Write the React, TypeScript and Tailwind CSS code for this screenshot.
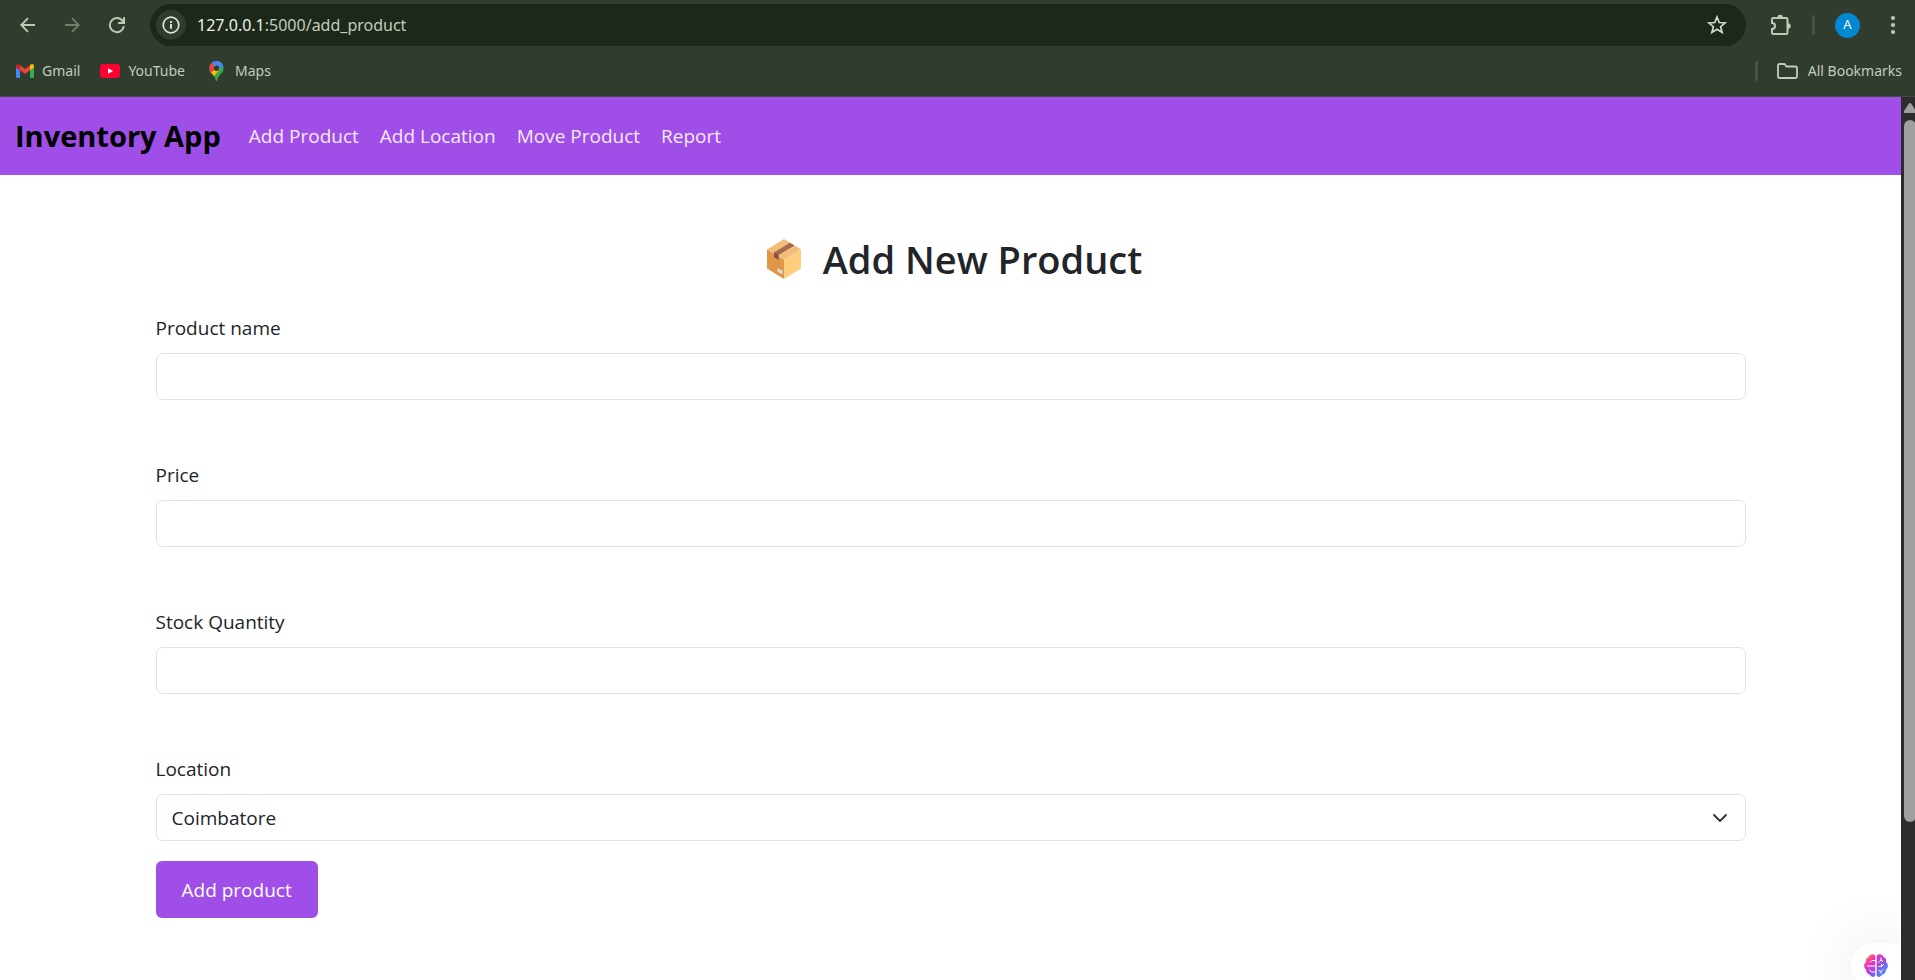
import React from "react";

const bookmarkClass = "flex items-center text-[14px] text-[#c4cbbd]";

function Toolbar() {
  return (
    <div className="flex h-[50px] items-center pl-4 pr-[15px] text-[#bccbb2]">
      <button aria-label="Back" className="p-1">
        <svg className="size-4" viewBox="0 0 16 16" fill="none" stroke="currentColor" strokeWidth="1.8"><path d="M15 8H1.500M8 1.200 1.300 8 8 14.800" /></svg>
      </button>
      <button aria-label="Forward" className="ml-5 p-1 text-[#6f7d69]">
        <svg className="size-4" viewBox="0 0 16 16" fill="none" stroke="currentColor" strokeWidth="1.8"><path d="M1 8h13.500M8 1.200 14.700 8 8 14.800" /></svg>
      </button>
      <button aria-label="Reload" className="ml-5 p-1">
        <svg className="size-[18px]" viewBox="0 0 18 18" fill="none" stroke="currentColor" strokeWidth="2"><path d="M15.800 10.200A7 7 0 1 1 14.700 5.200L16 6.800M16 1.200v5.800h-5.800" /></svg>
      </button>
      <div className="ml-5 flex h-[42px] min-w-0 flex-1 items-center rounded-full bg-[#1b281a] pl-[6px] pr-[19px]">
        <button aria-label="View site information" className="flex size-[30px] items-center justify-center rounded-full bg-[#303d2e] text-[#e0e6d8]">
          <svg className="size-[18px]" viewBox="0 0 18 18" fill="none" stroke="currentColor"><circle cx="9" cy="9" r="7.800" strokeWidth="1.700" /><path d="M9 8v4.800M9 5v1.900" strokeWidth="1.900" /></svg>
        </button>
        <div className="ml-[11px] min-w-0 flex-1 text-[16px]">
          <a href="#" className="text-[#c5cdbd]"><span className="text-[#eef1e8]">127.0.0.1</span>:5000/add_product</a>
        </div>
        <button aria-label="Bookmark this tab" className="text-[#d2d8ca]">
          <svg className="size-5" viewBox="0 0 20 20" fill="none" stroke="currentColor" strokeWidth="1.700"><path d="m10 2 2.200 5.500 6 .400-4.600 3.800 1.500 5.800L10 14.300l-5.100 3.200 1.500-5.800L1.800 7.900l6-.400Z" /></svg>
        </button>
      </div>
      <button aria-label="Extensions" className="ml-6">
        <svg className="size-[22px]" viewBox="0 0 22 22" fill="none" stroke="currentColor" strokeWidth="2"><path d="M3.300 4h13q1.200 0 1.200 1.200v13.600q0 1.200-1.200 1.200h-13Q2 20 2 18.800v-3.700q3 0 3-3.100T2 8.900V5.200Q2 4 3.300 4Z" /><path d="M7.500 3.500a2.700 2.700 0 0 1 5.400 0ZM18 9.300a2.700 2.700 0 0 1 0 5.400Z" fill="currentColor" stroke="none" /></svg>
      </button>
      <div className="ml-5 h-5 w-[3px] rounded-full bg-[#455541]" />
      <button aria-label="Profile" className="ml-5 flex size-[25px] items-center justify-center rounded-full bg-[#0288d1] text-[13px] text-white">A</button>
      <button aria-label="Menu" className="ml-[26px] px-1">
        <svg className="h-5 w-[6px]" viewBox="0 0 6 20" fill="currentColor"><circle cx="3" cy="3" r="2.100" /><circle cx="3" cy="10" r="2.100" /><circle cx="3" cy="17" r="2.100" /></svg>
      </button>
    </div>
  );
}

function Bookmarks() {
  return (
    <div className="flex h-[46px] items-center pb-[5px] pl-4 pr-[13px]">
      <a href="#" className={bookmarkClass}>
        <svg className="mr-2 h-[14px] w-[18px]" viewBox="0 0 18 14"><path d="M0 2v10.700Q0 14 1.300 14H4V5.200Z" fill="#4285f4" /><path d="M18 2v10.700q0 1.300-1.300 1.300H14V5.200Z" fill="#34a853" /><path d="M4 1.200 9 5l5-3.800v5L9 10 4 6.200Z" fill="#ea4335" /><path d="M0 2Q0 0 1.900 0 2.700 0 4 1.200v5L0 3.500Z" fill="#c5221f" /><path d="M18 2q0-2-1.900-2-.8 0-2.100 1.200v5l4-2.700Z" fill="#fbbc04" /></svg>
        Gmail
      </a>
      <a href="#" className={bookmarkClass + " ml-5"}>
        <svg className="mr-2 h-[14px] w-5" viewBox="0 0 20 14"><rect width="20" height="14" rx="3" fill="#ff0033" /><path d="m8 4.300 5 2.700-5 2.700Z" fill="#fff" /></svg>
        YouTube
      </a>
      <a href="#" className={bookmarkClass + " ml-6"}>
        <svg className="mr-[11px] h-5 w-[15px]" viewBox="0 0 15 20"><defs><clipPath id="pin"><path d="M7.500 0A7.200 7.200 0 0 0 .3 7.200C.3 12.500 6 13.500 6.700 19.200q.2.800.8.800t.8-.800C9 13.500 14.700 12.500 14.700 7.200A7.200 7.200 0 0 0 7.500 0Z" /></clipPath></defs><g clipPath="url(#pin)"><path d="M0 0h15v20H0Z" fill="#34a853" /><path d="M0 13 11 0H0Z" fill="#1a73e8" /><path d="M0 0v7l7.500 1L4 0Z" fill="#ea4335" /><path d="M5 0 15 0v5L8 9 3 2.500Z" fill="#4285f4" /><path d="M0 12 6 4l5 4-7.500 9Z" fill="#fbbc04" /><path d="m0 2 7 5-6 6Z" fill="#ea4335" /></g><circle cx="7.500" cy="7.200" r="2.700" fill="#303d2e" /></svg>
        Maps
      </a>
      <div className="ml-auto h-5 w-[3px] rounded-full bg-[#455541]" />
      <a href="#" className={bookmarkClass + " ml-[19px]"}>
        <svg className="mr-[10px] h-4 w-[21px]" viewBox="0 0 21 16" fill="none" stroke="currentColor" strokeWidth="1.800"><path d="M1 2.500Q1 1 2.500 1h5l2 2.500h9Q20 3.500 20 5v8.500q0 1.500-1.500 1.500h-16Q1 15 1 13.500Z" /></svg>
        All Bookmarks
      </a>
    </div>
  );
}

function TextField({ id, label }: { id: string; label: string }) {
  return (
    <div className="mb-[62px]">
      <label htmlFor={id} className="mb-3 block">{label}</label>
      <input id={id} name={id} className="block h-[47px] w-full rounded-[7px] border border-[#dee2e6] bg-white px-[15px]" />
    </div>
  );
}

function PackageIcon() {
  return (
    <svg className="h-10 w-[34px]" viewBox="0 0 34 40" aria-hidden="true">
      <path d="M17 0 34 10.500 17 21 0 10.500Z" fill="#f2bd79" />
      <path d="M0 10.500 17 21v19L0 29.500Z" fill="#e19747" />
      <path d="M34 10.500 17 21v19l17-10.500Z" fill="#ffce7c" />
      <path d="m23 3.700 4.500 2.700L11.500 16v4.700L7 18v-4.600Z" fill="#a56a52" />
      <path d="m7 13.400 4.500 2.800v4.500L7 18Z" fill="#8a5140" />
      <path d="m10.500 29 5 2.500v4l-5-2.800Z" fill="#dadada" />
    </svg>
  );
}

function BrainIcon() {
  return (
    <svg className="h-[23px] w-6" viewBox="0 0 24 23" aria-hidden="true">
      <defs>
        <linearGradient id="brain" x1="0" y1="0" x2="1" y2="1">
          <stop offset="0" stopColor="#ffa000" /><stop offset=".3" stopColor="#f431b5" /><stop offset=".6" stopColor="#8a52ef" /><stop offset="1" stopColor="#22b2ff" />
        </linearGradient>
      </defs>
      <path d="M11.300 1.500C9-.800 5.500 0 4.500 3 2 4 1.500 6 2 8-.5 10-.5 14 2 15.500c0 3 1.500 4.500 3.500 5 2 3 5 3 5.800 1ZM12.700 1.500C15-.800 18.500 0 19.500 3c2.500 1 3 3 2.500 5 2.500 2 2.500 6 0 7.500 0 3-1.500 4.500-3.500 5-2 3-5 3-5.800 1Z" fill="url(#brain)" />
      <path d="M11 6.500H8L6 8.500M3 12h8M5.500 15.500l2 2.500H11M14.500 8.500l2.500-2.500V3.500M17 6l2 1.500M14.500 12.500h3l2.500-2.500M17.500 12.500v-2.500M14.500 16.500l2.500 1 2-2M17 17.500v2" fill="none" stroke="#fff" strokeWidth="1" />
    </svg>
  );
}

const links = ["Add Product", "Add Location", "Move Product", "Report"];

export default function App() {
  return (
    <div className="flex h-screen flex-col overflow-hidden bg-[#303d2e] font-['Open_Sans',sans-serif]">
      <header className="shrink-0 border-b border-[#434c41] font-['Noto_Sans',sans-serif]">
        <Toolbar />
        <Bookmarks />
      </header>
      <div className="flex min-h-0 flex-1">
        <div className="relative flex min-w-0 flex-1 flex-col overflow-hidden bg-white text-[19px] leading-[26px] text-[#212529]">
          <nav className="flex h-[78px] shrink-0 items-center bg-[#a04ee8] px-[15px]">
            <a href="#" className="mr-7 text-[29px] font-bold text-black">Inventory App</a>
            <div className="flex gap-[21px] text-[#f4e9fd]">
              {links.map((link) => <a key={link} href="#">{link}</a>)}
            </div>
          </nav>
          <main className="mx-auto w-full max-w-[1620px] px-[15px] pt-[60px]">
            <h1 className="mb-8 flex items-center justify-center gap-[22px] pl-2 text-[38px] leading-[48px] font-semibold">
              <PackageIcon />
              Add New Product
            </h1>
            <form onSubmit={(event) => event.preventDefault()}>
              <TextField id="name" label="Product name" />
              <TextField id="price" label="Price" />
              <TextField id="quantity" label="Stock Quantity" />
              <label htmlFor="location" className="mb-3 block">Location</label>
              <div className="relative mb-5">
                <select id="location" className="block h-[47px] w-full appearance-none rounded-[7px] border border-[#dee2e6] bg-white px-[15px]">
                  <option>Coimbatore</option>
                </select>
                <svg className="pointer-events-none absolute top-4 right-[18px] size-4" viewBox="0 0 16 16" fill="none" stroke="#343a40" strokeWidth="2" strokeLinecap="round" strokeLinejoin="round"><path d="m2 5 6 6 6-6" /></svg>
              </div>
              <button className="h-[57px] rounded-[6px] bg-[#a04ee8] px-[26px] text-white">Add product</button>
            </form>
          </main>
          <button aria-label="Assistant" className="absolute right-0 bottom-[-8px] flex h-[45px] w-[50px] items-center rounded-l-full bg-white pl-[13px] shadow-[0_0_60px_rgba(0,0,0,0.12)]">
            <BrainIcon />
          </button>
        </div>
        <div className="flex w-[14px] shrink-0 flex-col overflow-hidden bg-[#2c2c2c] pt-[6px] pl-[3px]">
          <svg className="h-[10px] w-3 shrink-0" viewBox="0 0 12 10" fill="#9f9f9f"><path d="M4.500 1Q6 -1 7.500 1L12 8q.5 2-1 2H1q-1.500 0-1-2Z" /></svg>
          <div className="mt-[7px] h-4/5 w-3 shrink-0 rounded-full bg-[#9f9f9f]" />
        </div>
      </div>
    </div>
  );
}
